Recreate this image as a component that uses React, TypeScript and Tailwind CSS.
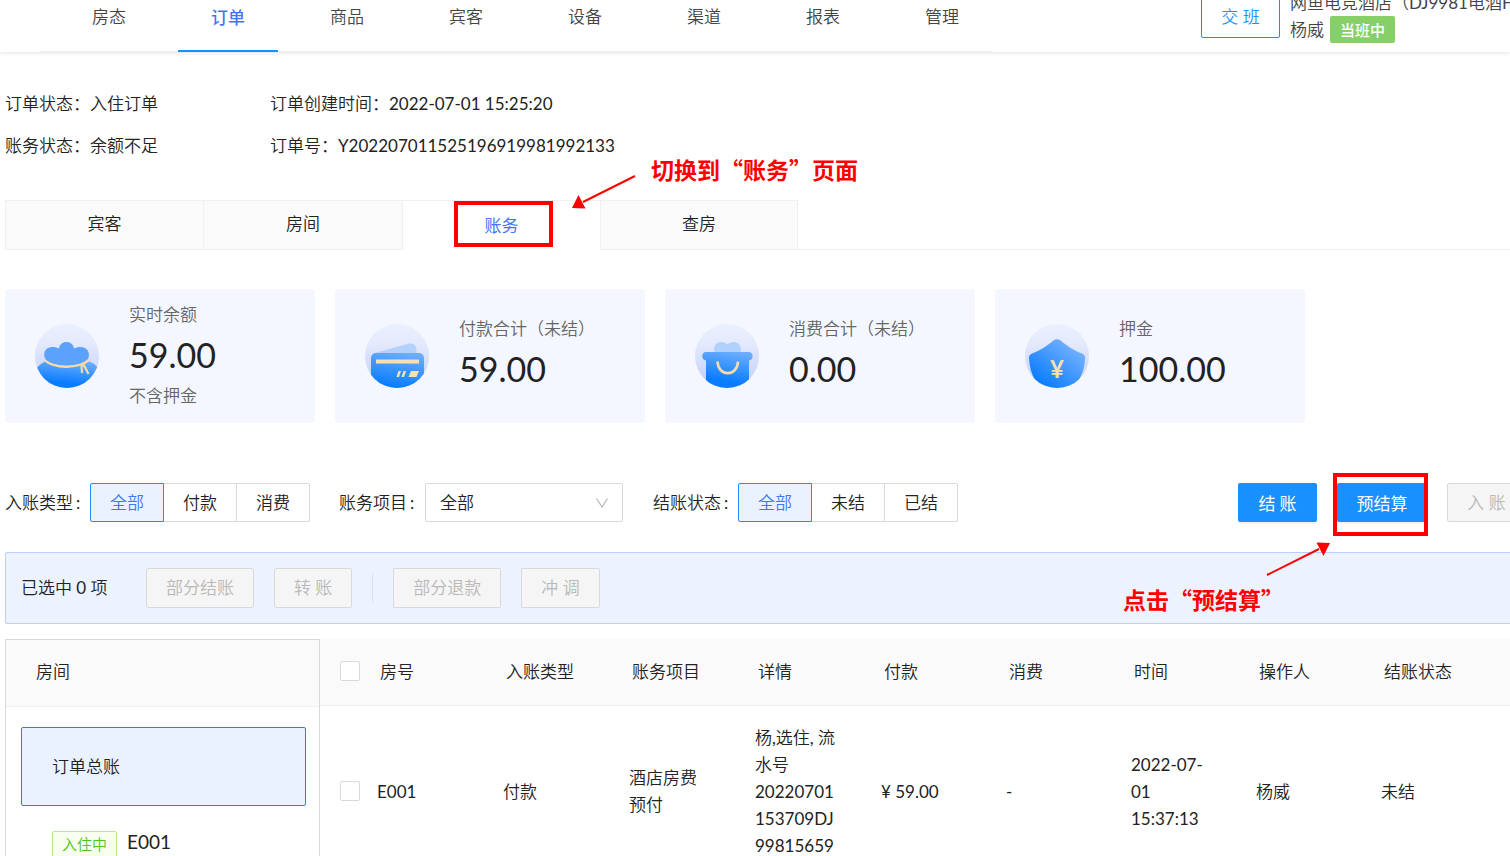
import { ReactNode, useState } from "react";

type StatCardProps = {
  icon: ReactNode;
  label: string;
  value: string;
  note?: string;
};

type SegmentedProps = {
  name: string;
  label: string;
  options: string[];
};

const navItems = ["房态", "订单", "商品", "宾客", "设备", "渠道", "报表", "管理"];

const columns = [
  "房号",
  "入账类型",
  "账务项目",
  "详情",
  "付款",
  "消费",
  "时间",
  "操作人",
  "结账状态",
];

const rows: string[][][] = [
  [
    ["E001"],
    ["付款"],
    ["酒店房费", "预付"],
    ["杨,选住, 流", "水号", "20220701", "153709DJ", "99815659"],
    ["¥ 59.00"],
    ["-"],
    ["2022-07-", "01", "15:37:13"],
    ["杨威"],
    ["未结"],
  ],
];

// Round badge shared by the four stat icons
const IconBase = ({ id, children }: { id: string; children: ReactNode }) => (
  <svg viewBox="0 0 64 64" className="h-16 w-16 shrink-0" aria-hidden="true">
    <defs>
      <linearGradient id={`${id}-bg`} x1="0" y1="0" x2="0" y2="1">
        <stop offset="0" stopColor="#ebf0ff" />
        <stop offset="0.3" stopColor="#e4eafd" />
        <stop offset="1" stopColor="#bfcdf6" />
      </linearGradient>
      <linearGradient id={`${id}-fg`} x1="0.65" y1="0" x2="0.4" y2="1">
        <stop offset="0" stopColor="#6aadff" />
        <stop offset="0.8" stopColor="#0a7dff" />
      </linearGradient>
      <clipPath id={`${id}-clip`}>
        <circle cx="32" cy="32" r="32" />
      </clipPath>
    </defs>
    <g clipPath={`url(#${id}-clip)`}>
      <rect width="64" height="64" fill={`url(#${id}-bg)`} />
      {children}
    </g>
  </svg>
);

const BagIcon = () => (
  <IconBase id="bag">
    <path
      d="M10 37.5C4 41 1 44 0 48V64H64V46C62 41 58 39 54 37.5C46 45 18 45 10 37.5Z"
      fill="url(#bag-fg)"
    />
    <path
      d="M11 36C7.500 31 9 23.500 17 23C20 22.800 22 23.500 24 24.500C24.500 20.500 27.500 18 31.500 18C35.500 18 38.500 20.500 39 24.500C41 23.500 43 22.800 46 23C54 23.500 55.500 31 52.500 36C45 43.500 19 43.500 11 36Z"
      fill="#5aa2fb"
    />
    <path
      d="M10 36.500C20 45 43 45 53.500 36M46.500 41L47 49M48.500 40.500L53.500 50"
      fill="none"
      stroke="#fbd9a0"
      strokeWidth="2.2"
    />
  </IconBase>
);

const CardIcon = () => (
  <IconBase id="card">
    <path d="M10 29L44 19.600Q49.500 18.500 51 23L52 31H10Z" fill="#b4d1fc" />
    <rect x="6" y="29" width="53" height="42" rx="5" fill="url(#card-fg)" />
    <rect x="11" y="35.500" width="43" height="4" fill="#fddfab" />
    <path
      d="M33.500 47H36L34 53H31.500ZM38.500 47H41L39 53H36.500ZM46 47H54L51.500 53H43.500Z"
      fill="#fddfab"
    />
  </IconBase>
);

const BasketIcon = () => (
  <IconBase id="basket">
    <path
      d="M20 30C17 22 22 18 26 18C29 18 31 19 32.500 20.500C34 19 36 18 39 18C43 18 48 22 45 30Z"
      fill="#b0d0fd"
    />
    <path
      d="M11 28H53.500C59 28 59 36 54 36.500V64H11V36.500C6 36 6 28 11 28Z"
      fill="url(#basket-fg)"
    />
    <path
      d="M22.500 37.500C23 53 42.500 53 43 37.500"
      fill="none"
      stroke="#fbdcaa"
      strokeWidth="2.6"
    />
  </IconBase>
);

const ShieldIcon = () => (
  <IconBase id="shield">
    <linearGradient id="shield-body" x1="0.9" y1="0.1" x2="0.2" y2="0.9">
      <stop offset="0" stopColor="#7db5ff" />
      <stop offset="1" stopColor="#0a7dff" />
    </linearGradient>
    <path
      d="M28.500 16.500Q32 14 35.500 16.500C42 22 48 26 57 29.500Q60.500 31 60 34.500C59.500 44 57 50 54 56V64H10V56C6.500 50 4.500 43 4 34.500Q3.500 31 7 29.500C16 26 22 22 28.500 16.500Z"
      fill="url(#shield-body)"
    />
    <text
      x="32"
      y="54"
      textAnchor="middle"
      fill="#fddfab"
      className="font-['Lato',sans-serif] text-[24px] font-bold"
    >
      ¥
    </text>
  </IconBase>
);

const StatCard = ({ icon, label, value, note }: StatCardProps) => (
  <div className="flex h-[134px] w-[310px] items-center gap-[30px] rounded bg-[#f4f7ff] px-[30px]">
    {icon}
    <div className="pb-[2px] leading-[27px] whitespace-nowrap text-[#666]">
      <p>{label}</p>
      <p className="text-[34px] leading-[54px] text-[#222]">{value}</p>
      {note && <p>{note}</p>}
    </div>
  </div>
);

const Segmented = ({ name, label, options }: SegmentedProps) => {
  const [value, setValue] = useState(options[0]);

  return (
    <fieldset className="flex items-center">
      <legend className="float-left w-[85px]">
        {label}
        <span className="ml-[3px]">:</span>
      </legend>
      <div className="flex">
        {options.map((option) => (
          <label
            key={option}
            className={`-ml-px flex h-[39px] w-[74px] cursor-pointer items-center justify-center border first:ml-0 first:rounded-l-xs last:rounded-r-xs ${
              value === option
                ? "z-10 border-[#1890ff] bg-[#ebf2ff] text-[#3f75ff]"
                : "border-[#d9d9d9] bg-white"
            }`}
          >
            <input
              type="radio"
              name={name}
              checked={value === option}
              onChange={() => setValue(option)}
              className="sr-only"
            />
            {option}
          </label>
        ))}
      </div>
    </fieldset>
  );
};

const DisabledButton = ({ children }: { children: ReactNode }) => (
  <button
    disabled
    className="h-10 shrink-0 rounded-xs border border-[#d9d9d9] bg-[#f5f5f5] px-[19px] text-[#b8b8b8]"
  >
    {children}
  </button>
);

const Arrow = ({ className }: { className: string }) => (
  <svg viewBox="0 0 66 36" className={className} aria-hidden="true">
    <path d="M64 2L12 28" stroke="#f00" strokeWidth="2" />
    <path d="M1 34L7.500 21L14.500 34.500Z" fill="#f00" />
  </svg>
);

const Header = () => (
  <header className="flex h-[52px] items-start pl-10 shadow-[0_1px_4px_rgba(0,21,41,0.12)]">
    <nav className="flex border-b border-[#f0f0f0]">
      {navItems.map((item) => (
        <a
          key={item}
          href="#"
          className={`-mb-px ml-[19px] w-[100px] border-b-2 pb-4 text-center leading-[34px] ${
            item === "订单"
              ? "border-[#1890ff] font-['Noto_Sans_CJK_SC',sans-serif] font-medium text-[#3f75ff]"
              : "border-transparent text-[#444]"
          }`}
        >
          {item}
        </a>
      ))}
    </nav>
    <button className="-mt-1 ml-auto h-[42px] w-[79px] shrink-0 rounded-xs border border-[#1890ff] text-[#1890ff]">
      交 班
    </button>
    <div className="-mt-[11px] ml-[10px] w-[220px] shrink-0 overflow-hidden leading-[27px] whitespace-nowrap text-[#444]">
      <p>网鱼电竞酒店（DJ9981电酒F）</p>
      <p className="flex">
        杨威
        <span className="ml-[6px] rounded-xs bg-[#87d068] px-[10px] font-['Noto_Sans_CJK_SC',sans-serif] text-[15px] font-medium text-white">
          当班中
        </span>
      </p>
    </div>
  </header>
);

const Tabs = () => {
  const tab = "h-[50px] border border-[#f0f0f0] bg-[#fafafa] pb-[2px]";

  return (
    <div role="tablist" className="mt-[33px] flex">
      <button role="tab" className={`${tab} w-[199px]`}>
        宾客
      </button>
      <button role="tab" className={`${tab} w-[199px] border-l-0`}>
        房间
      </button>
      <div className="relative">
        <button
          role="tab"
          aria-selected="true"
          className="h-[50px] w-[197px] border-t border-[#f0f0f0] pb-[2px] font-['Noto_Sans_CJK_SC',sans-serif] text-[#3f75ff]"
        >
          账务
        </button>
        <span className="pointer-events-none absolute top-px left-[51px] h-[46px] w-[99px] border-4 border-[#f00]" />
        <Arrow className="absolute -top-[26px] left-[168px] h-9 w-[66px]" />
        <p className="absolute -top-[48px] left-[248px] font-['Noto_Sans_CJK_SC',sans-serif] text-[23px] leading-[34px] font-bold whitespace-nowrap text-[#f00]">
          切换到“账务”页面
        </p>
      </div>
      <button role="tab" className={`${tab} w-[198px]`}>
        查房
      </button>
      <div className="flex-1 border-b border-[#f0f0f0]" />
    </div>
  );
};

const Filters = () => (
  <div className="mt-[60px] -mr-4 flex items-center">
    <Segmented name="entry" label="入账类型" options={["全部", "付款", "消费"]} />
    <label htmlFor="item" className="ml-[29px] w-[86px]">
      账务项目
      <span className="ml-[3px]">:</span>
    </label>
    <div className="relative">
      <select
        id="item"
        className="h-[39px] w-[198px] appearance-none rounded-xs border border-[#d9d9d9] bg-white pl-[14px]"
      >
        <option>全部</option>
      </select>
      <svg
        viewBox="0 0 12 10"
        className="pointer-events-none absolute top-[15px] right-[15px] h-[10px] w-3"
        aria-hidden="true"
      >
        <path d="M0.500 0.500L6 9L11.500 0.500" fill="none" stroke="#b5b5b5" strokeWidth="1.2" />
      </svg>
    </div>
    <div className="ml-[30px]">
      <Segmented name="status" label="结账状态" options={["全部", "未结", "已结"]} />
    </div>
    <div className="ml-auto flex shrink-0 gap-5">
      <button className="h-[39px] w-[79px] rounded-xs bg-[#1890ff] font-['Noto_Sans_CJK_SC',sans-serif] text-white shadow-[0_2px_0_rgba(0,0,0,0.045)]">
        结 账
      </button>
      <div className="relative">
        <button className="h-[39px] w-[90px] rounded-xs bg-[#1890ff] font-['Noto_Sans_CJK_SC',sans-serif] text-white shadow-[0_2px_0_rgba(0,0,0,0.045)]">
          预结算
        </button>
        <span className="pointer-events-none absolute -top-[10px] -left-1 h-[63px] w-[95px] border-4 border-[#f00]" />
        <Arrow className="absolute top-[58px] -left-[72px] h-9 w-[66px] rotate-180" />
        <p className="absolute top-[99px] -left-[214px] font-['Noto_Sans_CJK_SC',sans-serif] text-[23px] leading-[34px] font-bold whitespace-nowrap text-[#f00]">
          点击“预结算”
        </p>
      </div>
      <button
        disabled
        className="h-[39px] w-[79px] rounded-xs border border-[#d9d9d9] bg-[#f5f5f5] text-[#b8b8b8]"
      >
        入 账
      </button>
    </div>
  </div>
);

const BatchBar = () => (
  <div className="mt-[30px] -mr-4 flex h-[72px] items-center gap-5 rounded-xs border border-[#b9cefc] bg-[#ecf3ff] pl-[15px]">
    <p className="w-[105px]">已选中 0 项</p>
    <DisabledButton>部分结账</DisabledButton>
    <DisabledButton>转 账</DisabledButton>
    <span className="h-[30px] w-px bg-[#d9e1f0]" />
    <DisabledButton>部分退款</DisabledButton>
    <DisabledButton>冲 调</DisabledButton>
  </div>
);

const RoomPanel = () => (
  <aside className="w-[315px] shrink-0 border border-[#d9d9d9]">
    <h2 className="h-[67px] border-b border-[#f0f0f0] bg-[#fafafa] pl-[30px] leading-[64px]">
      房间
    </h2>
    <button className="mx-[15px] mt-5 block h-[79px] w-[285px] rounded-xs border border-[#3f75e8] bg-[#ebf2ff] pl-[30px] text-left">
      订单总账
    </button>
    <div className="mt-[25px] flex items-start gap-[10px] pl-[46px]">
      <span className="rounded-xs border border-[#b7eb8f] bg-[#f6ffed] px-[9px] text-[15px] leading-[24px] text-[#52c41a]">
        入住中
      </span>
      <span className="text-[19px] leading-[22px]">E001</span>
    </div>
  </aside>
);

const BillTable = () => {
  const checkbox =
    "block h-5 w-5 appearance-none rounded-xs border border-[#d9d9d9] bg-white checked:bg-[#1890ff]";

  return (
    <table className="w-full table-fixed self-start text-left">
      <colgroup>
        <col className="w-10" />
        {columns.map((column, index) => (
          <col key={column} className={index < 4 ? "w-[126px]" : "w-[125px]"} />
        ))}
        <col />
      </colgroup>
      <thead>
        <tr className="h-[66px] border-b border-[#f0f0f0] bg-[#fafafa]">
          <th className="pb-[2px] pl-5">
            <input type="checkbox" aria-label="全选" className={checkbox} />
          </th>
          {columns.map((column) => (
            <th
              key={column}
              className="pb-px pl-5 font-normal whitespace-nowrap"
            >
              {column}
            </th>
          ))}
          <th />
        </tr>
      </thead>
      <tbody>
        {rows.map((row) => (
          <tr key={row[0][0]}>
            <td className="py-[18px] pl-5">
              <input type="checkbox" aria-label={row[0][0]} className={checkbox} />
            </td>
            {row.map((lines, index) => (
              <td
                key={columns[index]}
                className="py-[18px] pl-[17px] leading-[27px] whitespace-nowrap"
              >
                {lines.map((line) => (
                  <p key={line}>{line}</p>
                ))}
              </td>
            ))}
            <td />
          </tr>
        ))}
      </tbody>
    </table>
  );
};

const App = () => {
  return (
    <div className="h-screen overflow-hidden bg-white font-['Lato','Noto_Sans_CJK_SC_DemiLight','Noto_Sans_CJK_SC',sans-serif] text-[17px] text-[#222]">
      <Header />
      <main className="pt-[31px] pl-[5px]">
        <div className="grid grid-cols-[265px_1fr] leading-[42px]">
          <p>订单状态：入住订单</p>
          <p>订单创建时间：2022-07-01 15:25:20</p>
          <p>账务状态：余额不足</p>
          <p>订单号：Y202207011525196919981992133</p>
        </div>
        <Tabs />
        <section className="mt-[39px] flex gap-5">
          <StatCard icon={<BagIcon />} label="实时余额" value="59.00" note="不含押金" />
          <StatCard icon={<CardIcon />} label="付款合计（未结）" value="59.00" />
          <StatCard icon={<BasketIcon />} label="消费合计（未结）" value="0.00" />
          <StatCard icon={<ShieldIcon />} label="押金" value="100.00" />
        </section>
        <Filters />
        <BatchBar />
        <section className="mt-[15px] flex">
          <RoomPanel />
          <BillTable />
        </section>
      </main>
    </div>
  );
};

export default App;
